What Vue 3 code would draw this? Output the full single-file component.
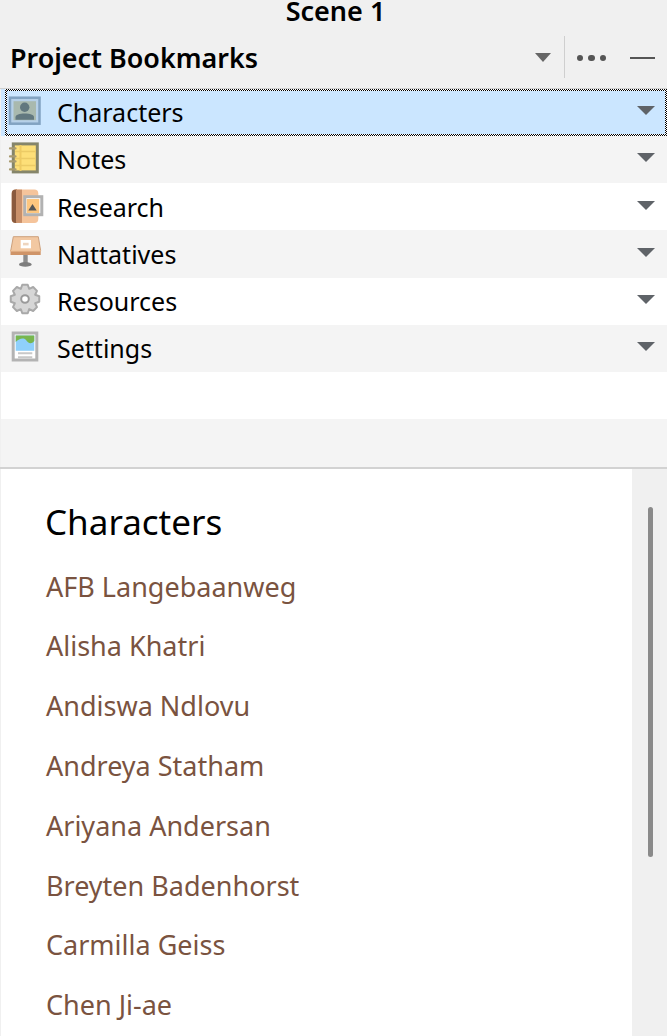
<script setup>
const rows = [
  { name: 'Characters', icon: 'person', active: true },
  { name: 'Notes', icon: 'notes' },
  { name: 'Research', icon: 'research' },
  { name: 'Nattatives', icon: 'lectern' },
  { name: 'Resources', icon: 'gear' },
  { name: 'Settings', icon: 'settings' },
  { name: '', icon: '' },
  { name: '', icon: '' },
]
const people = ['AFB Langebaanweg', 'Alisha Khatri', 'Andiswa Ndlovu', 'Andreya Statham', 'Ariyana Andersan', 'Breyten Badenhorst', 'Carmilla Geiss', 'Chen Ji-ae']

function gear(cx, cy, outer, inner, teeth) {
  const pts = []
  const step = (Math.PI * 2) / teeth
  for (let i = 0; i < teeth; i++) {
    const a = i * step - Math.PI / 2
    const spec = [[-0.5, inner], [-0.24, outer], [0.24, outer], [0.5, inner]]
    for (const [k, r] of spec) {
      const t = a + k * step
      pts.push((cx + r * Math.cos(t)).toFixed(2) + ' ' + (cy + r * Math.sin(t)).toFixed(2))
    }
  }
  return 'M' + pts.join('L') + 'Z'
}
const gearPath = gear(16, 14, 14.5, 11, 8)
</script>

<template>
  <div class="app">
    <div class="scene">Scene 1</div>
    <header class="head">
      <div class="head-title">Project Bookmarks</div>
      <svg class="head-caret" width="16" height="9" viewBox="0 0 16 9"><path d="M0 0H16L8 9Z" fill="#666" /></svg>
      <div class="head-sep"></div>
      <div class="dots"><i></i><i></i><i></i></div>
      <div class="dash"></div>
    </header>
    <div class="list">
      <div v-for="(r, i) in rows" :key="i" class="row" :class="{ alt: i % 2 === 1, active: r.active }">
        <svg v-if="r.icon" class="ico" width="32" height="32" viewBox="0 0 32 32">
          <g v-if="r.icon === 'person'" transform="translate(0 0.700)">
            <rect x="1" y="1" width="29.500" height="26" fill="#b6d0e8" stroke="#82a3c2" stroke-width="2.500" />
            <rect x="4.500" y="4.500" width="22.500" height="19" fill="#a9b9ae" />
            <circle cx="15.700" cy="10.500" r="4.700" fill="#62787f" />
            <path d="M6.500 23v-2.500c0-2.500 4-3.700 9.200-3.700s9.300 1.200 9.300 3.700V23Z" fill="#62787f" />
          </g>
          <g v-else-if="r.icon === 'notes'" transform="translate(0.500 0)">
            <rect x="3.800" y="-0.100" width="24" height="28" fill="#fddf78" stroke="#85856a" stroke-width="3" />
            <path d="M11 1v26" stroke="#efcb62" stroke-width="2" />
            <path d="M5.500 7.400h21M5.500 14.400h21M5.500 21.400h21" stroke="#eccb66" stroke-width="1.500" />
            <path d="M0.500 4.400h5.500M0.500 12.400h5.500M0.500 17.400h5.500M0.500 25.400h5.500" stroke="#a89a70" stroke-width="2.200" stroke-linecap="round" />
          </g>
          <template v-else-if="r.icon === 'research'">
            <rect x="2.700" y="-1.400" width="26.600" height="33.300" rx="4" fill="#f5c49b" />
            <path d="M6.700-1.400H8V31.900H6.700a4 4 0 0 1-4-4V2.600a4 4 0 0 1 4-4Z" fill="#8a5a3e" />
            <path d="M7-1.400h6V31.900H7Z" fill="#c9906a" />
            <rect x="15.800" y="5.700" width="17" height="18" fill="#fff" stroke="#b2b2b2" stroke-width="3" />
            <rect x="17.700" y="8" width="12.600" height="14" fill="#fdc67e" />
            <path d="M19.300 19.600 23.500 13l4.200 6.600Z" fill="#555" />
          </template>
          <template v-else-if="r.icon === 'lectern'">
            <path d="M4.300-1.300H29.300L31.700 13H1.700Z" fill="#f2c8a2" stroke="#cda07c" stroke-width="1" />
            <rect x="1.500" y="12" width="30.200" height="5" fill="#cf9468" />
            <rect x="1.500" y="12" width="30.200" height="1.500" fill="#f0c49c" />
            <rect x="11.700" y="2" width="10.300" height="8.300" fill="#fff" />
            <rect x="14" y="4.800" width="5.600" height="2.600" fill="#eed5bf" />
            <rect x="14.300" y="17" width="4.400" height="8.500" fill="#8c8c8c" />
            <ellipse cx="16.300" cy="26.400" rx="6.300" ry="2.300" fill="#7d7d7d" />
          </template>
          <template v-else-if="r.icon === 'gear'">
            <path :d="gearPath" fill="#d6d6d6" stroke="#a9a9a9" stroke-width="2" stroke-linejoin="round" />
            <circle cx="16" cy="14" r="3.800" fill="#fff" stroke="#9a9a9a" stroke-width="2" />
          </template>
          <template v-else-if="r.icon === 'settings'">
            <rect x="4.200" y="0" width="23.600" height="27" fill="#fff" stroke="#b3b3b3" stroke-width="3" />
            <rect x="6.700" y="2.500" width="18.600" height="15.300" fill="#8fd0fb" />
            <path d="M6.700 2.500H25.300V8C22 12 19 10 17 7 14 4 10 6 6.700 9Z" fill="#78b64e" />
            <path d="M9 20.200h14.300M9 24.200h14.300" stroke="#c8c8c8" stroke-width="2" />
          </template>
        </svg>
        <span class="row-label">{{ r.name }}</span>
        <svg v-if="r.icon" class="row-caret" width="18" height="9" viewBox="0 0 18 9"><path d="M0 0H18L9 9Z" fill="#5f6368" /></svg>
      </div>
    </div>
    <div class="content">
      <main class="main">
        <h2 class="main-title">Characters</h2>
        <a v-for="p in people" :key="p" class="person">{{ p }}</a>
      </main>
      <aside class="scroll"><div class="thumb"></div></aside>
    </div>
  </div>
</template>

<style>
html, body { margin: 0; padding: 0; background: #fff; }
</style>

<style scoped>
.app {
  width: 667px;
  height: 1036px;
  overflow: hidden;
  background: #f0f0f0;
  font-family: "Noto Sans", "Open Sans", sans-serif;
  color: #000;
  display: flex;
  flex-direction: column;
}
.scene {
  height: 30px;
  line-height: 21px;
  text-align: center;
  font-size: 27px;
  font-weight: 600;
  padding-left: 4px;
}
.head {
  height: 57.700px;
  display: flex;
  align-items: center;
  padding: 0 12px 0 10px;
}
.head-title {
  font-size: 26.900px;
  font-weight: 600;
  flex: 1;
  position: relative;
  top: -1px;
}
.head-caret { margin-right: 13px; position: relative; left: -1px; top: -1px; }
.head-sep { width: 1px; height: 42px; background: #cfcfcf; margin-right: 11px; position: relative; left: -1px; top: -2px; }
.dots { display: flex; gap: 5px; margin-right: 24px; position: relative; top: -1px; }
.dots i { width: 6.500px; height: 6.500px; border-radius: 50%; background: #555; display: block; }
.dash { width: 25px; height: 2px; background: #555; position: relative; top: -1px; }
.list {
  border-top: 1px solid #cfcfcf;
  padding-left: 1px;
  display: flex;
  flex-direction: column;
}
.row {
  height: 47.250px;
  box-sizing: border-box;
  background: #fff;
  display: flex;
  align-items: center;
  padding: 0 12px 0 8px;
  position: relative;
}
.row.alt { background: #f4f4f4; }
.row.active { background: #cbe6ff; }
.row.active::after {
  content: "";
  position: absolute;
  inset: 0 0 0 4px;
  box-sizing: border-box;
  border: 2px solid transparent;
  background: repeating-conic-gradient(#000 0 25%, #fff 0 50%) 0 0 / 2px 2px border-box;
  -webkit-mask: linear-gradient(#000 0 0) padding-box exclude, linear-gradient(#000 0 0) border-box;
  mask: linear-gradient(#000 0 0) padding-box exclude, linear-gradient(#000 0 0) border-box;
}
.ico { flex: none; overflow: visible; }
.row-label {
  font-size: 25px;
  margin-left: 16px;
  flex: 1;
  white-space: nowrap;
  position: relative;
  top: -0.200px;
}
.row-caret { position: relative; top: -1.800px; }
.content {
  border-top: 2px solid #d2d2d2;
  flex: 1;
  display: flex;
  min-height: 0;
}
.main {
  flex: 1;
  background: #fff;
  margin-left: 1px;
  padding: 29px 0 0 45px;
  display: flex;
  flex-direction: column;
  overflow: hidden;
}
.main-title {
  font-size: 35px;
  font-weight: 400;
  margin: 0 0 23px -1px;
  line-height: 48px;
  flex: none;
}
.person {
  font-size: 27px;
  color: #7a5340;
  height: 59.800px;
  line-height: 36px;
  white-space: nowrap;
  flex: none;
}
.scroll {
  width: 35px;
  flex: none;
  background: #f0f0f0;
}
.thumb {
  width: 5px;
  height: 350px;
  background: #8a8a8a;
  border-radius: 3px;
  margin: 38px 0 0 16px;
}
</style>
